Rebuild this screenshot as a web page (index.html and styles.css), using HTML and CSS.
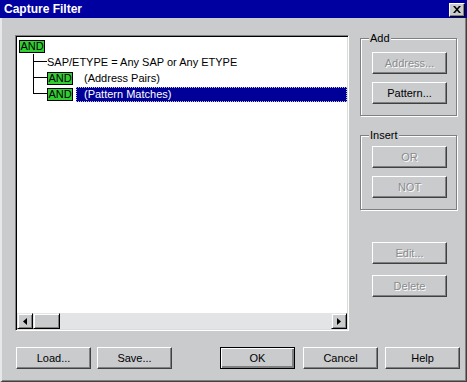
FILE: index.html
```html
<!DOCTYPE html>
<html lang="en">
<head>
  <meta charset="UTF-8">
  <title>Capture Filter</title>
  <link rel="stylesheet" href="styles.css">
</head>
<body>
  <div class="dialog">
    <div class="titlebar">
      <span class="title">Capture Filter</span>
      <button class="close" aria-label="Close">
        <svg width="8" height="7" viewBox="0 0 8 7"><path d="M0 0h2l2 2.2L6 0h2L5 3.5 8 7H6L4 4.8 2 7H0l3-3.5z" fill="#000"/></svg>
      </button>
    </div>

    <div class="client">
      <div class="main">
        <div class="tree">
          <div class="tree-body">
            <div class="row root">
              <span class="op">AND</span>
            </div>
            <div class="children">
              <div class="row">
                <span class="conn"><i class="up"></i><i class="down"></i></span>
                <span class="text">SAP/ETYPE = Any SAP or Any ETYPE</span>
              </div>
              <div class="row">
                <span class="conn"><i class="up"></i><i class="down"></i></span>
                <span class="op">AND</span>
                <span class="label">(Address Pairs)</span>
              </div>
              <div class="row">
                <span class="conn"><i class="up"></i><i class="down last"></i></span>
                <span class="op">AND</span>
                <span class="label selected">(Pattern Matches)</span>
              </div>
            </div>
          </div>
          <div class="hscroll">
            <span class="sbtn"><svg width="4" height="7" viewBox="0 0 4 7"><path d="M4 0v7L0 3.5z" fill="#000"/></svg></span>
            <span class="thumb"></span>
            <span class="track"></span>
            <span class="sbtn"><svg width="4" height="7" viewBox="0 0 4 7"><path d="M0 0v7l4-3.5z" fill="#000"/></svg></span>
          </div>
        </div>

        <div class="side">
          <fieldset class="group add">
            <legend>Add</legend>
            <button class="btn" disabled>Address...</button>
            <button class="btn">Pattern...</button>
          </fieldset>
          <fieldset class="group insert">
            <legend>Insert</legend>
            <button class="btn" disabled>OR</button>
            <button class="btn" disabled>NOT</button>
          </fieldset>
          <div class="edit-buttons">
            <button class="btn" disabled>Edit...</button>
            <button class="btn" disabled>Delete</button>
          </div>
        </div>
      </div>

      <div class="footer">
        <button class="btn">Load...</button>
        <button class="btn">Save...</button>
        <button class="btn default ok">OK</button>
        <button class="btn cancel">Cancel</button>
        <button class="btn help">Help</button>
      </div>
    </div>
  </div>
</body>
</html>
```

FILE: styles.css
```css
* {
  box-sizing: border-box;
}

body {
  margin: 0;
  width: 467px;
  height: 382px;
  overflow: hidden;
  background: #c9cbcd;
  font-family: 'Liberation Sans', Arial, sans-serif;
  font-size: 11px;
  color: #000;
}

.dialog {
  width: 467px;
  height: 382px;
  display: flex;
  flex-direction: column;
}

.titlebar {
  height: 18px;
  background: #0000a0;
  display: flex;
  align-items: center;
  justify-content: space-between;
  padding: 0 2px 0 4px;
}

.title {
  color: #fff;
  font-weight: bold;
  font-size: 12px;
}

.close {
  width: 16px;
  height: 14px;
  padding: 0;
  margin-top: 1px;
  background: #c9cbcd;
  border: 1px solid;
  border-color: #fff #000 #000 #fff;
  box-shadow: inset -1px -1px #808080;
  display: flex;
  align-items: center;
  justify-content: center;
}

.client {
  flex: 1;
  border-left: 2px solid #e6e8ea;
  border-right: 1px solid #404040;
  border-bottom: 1px solid #404040;
  box-shadow: inset -1px -1px #808080;
  padding: 14px 0 0 13px;
}

.main {
  display: flex;
  gap: 11px;
}

/* tree view */
.tree {
  width: 334px;
  height: 296px;
  margin-top: 3px;
  background: #fff;
  border: 1px solid;
  border-color: #808080 #fff #fff #808080;
  box-shadow: inset 1px 1px #000, inset -1px -1px #dcdcdc;
  padding: 1px;
  display: flex;
  flex-direction: column;
}

.tree-body {
  flex: 1;
  padding: 1px 0 0 2px;
}

.row {
  height: 16px;
  display: flex;
  align-items: center;
}

.op {
  width: 26px;
  height: 13px;
  background: #33cc33;
  border: 1px solid #000;
  font-size: 11px;
  line-height: 11px;
  text-align: center;
  flex-shrink: 0;
}

.children {
  margin-left: 14px;
}

.conn {
  width: 14px;
  height: 16px;
  display: flex;
  flex-direction: column;
  flex-shrink: 0;
}

.conn .up {
  height: 8px;
  border-left: 1px solid #000;
  border-bottom: 1px solid #000;
}

.conn .down {
  flex: 1;
  border-left: 1px solid #000;
}

.conn .down.last {
  border-left: none;
}

.label {
  flex: 1;
  height: 15px;
  margin-left: 3px;
  padding-left: 7px;
  line-height: 13px;
  border: 1px solid transparent;
}

.label.selected {
  background: #000099;
  color: #fff;
  border: 1px dotted #c8c8c8;
}

.hscroll {
  height: 16px;
  display: flex;
  background: #e2e4e6;
}

.sbtn,
.thumb {
  width: 16px;
  height: 16px;
  background: #c9cbcd;
  border: 1px solid;
  border-color: #e6e6e6 #000 #000 #e6e6e6;
  box-shadow: inset 1px 1px #fff, inset -1px -1px #808080;
  display: flex;
  align-items: center;
  justify-content: center;
}

.thumb {
  width: 27px;
}

.track {
  flex: 1;
}

/* right column */
.side {
  width: 97px;
  display: flex;
  flex-direction: column;
}

.group {
  margin: 0;
  padding: 1px 9px 11px 11px;
  border: 1px solid #808080;
  box-shadow: inset 1px 1px #fff, 1px 1px #fff;
  display: flex;
  flex-direction: column;
  gap: 8px;
  width: 96px;
}

.group legend {
  padding: 0 1px;
  margin-left: -3px;
  line-height: 13px;
  background: #c9cbcd;
}

.group .btn:first-of-type {
  margin-top: 6px;
}

.insert {
  margin-top: 13px;
}

.insert .btn:first-of-type {
  margin-top: 3px;
}

.edit-buttons {
  margin-top: 32px;
  padding-left: 12px;
  display: flex;
  flex-direction: column;
  gap: 11px;
}

/* buttons */
.btn {
  width: 75px;
  height: 22px;
  padding: 0;
  font-family: inherit;
  font-size: 11px;
  color: #000;
  background: #c9cbcd;
  border: 1px solid;
  border-color: #fff #404040 #404040 #fff;
  box-shadow: inset -1px -1px #808080;
  flex-shrink: 0;
}

.btn:disabled {
  color: #8a8c8e;
  text-shadow: 1px 1px #fff;
}

.btn.default {
  border: 1px solid #000;
  box-shadow: inset 1px 1px #fff, inset -2px -2px #808080;
}

.footer {
  display: flex;
  gap: 6px;
  margin-top: 16px;
  padding-left: 1px;
}

.ok {
  margin-left: 42px;
}

.cancel {
  margin-left: 2px;
}

.help {
  margin-left: 1px;
}
```
